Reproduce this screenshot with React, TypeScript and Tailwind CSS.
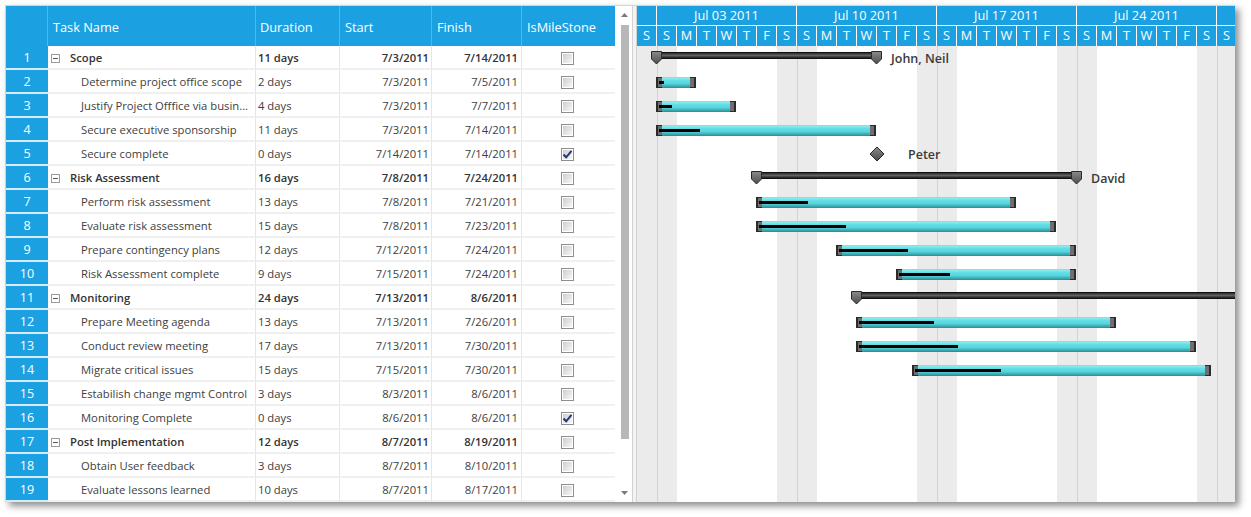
import React from "react";

type Task = {
  id: number;
  name: string;
  dur: string;
  start: string;
  finish: string;
  summary?: boolean;
  checked?: boolean;
};

const tasks: Task[] = [
  { id: 1, name: "Scope", dur: "11 days", start: "7/3/2011", finish: "7/14/2011", summary: true },
  { id: 2, name: "Determine project office scope", dur: "2 days", start: "7/3/2011", finish: "7/5/2011" },
  { id: 3, name: "Justify Project Offfice via busin...", dur: "4 days", start: "7/3/2011", finish: "7/7/2011" },
  { id: 4, name: "Secure executive sponsorship", dur: "11 days", start: "7/3/2011", finish: "7/14/2011" },
  { id: 5, name: "Secure complete", dur: "0 days", start: "7/14/2011", finish: "7/14/2011", checked: true },
  { id: 6, name: "Risk Assessment", dur: "16 days", start: "7/8/2011", finish: "7/24/2011", summary: true },
  { id: 7, name: "Perform risk assessment", dur: "13 days", start: "7/8/2011", finish: "7/21/2011" },
  { id: 8, name: "Evaluate risk assessment", dur: "15 days", start: "7/8/2011", finish: "7/23/2011" },
  { id: 9, name: "Prepare contingency plans", dur: "12 days", start: "7/12/2011", finish: "7/24/2011" },
  { id: 10, name: "Risk Assessment complete", dur: "9 days", start: "7/15/2011", finish: "7/24/2011" },
  { id: 11, name: "Monitoring", dur: "24 days", start: "7/13/2011", finish: "8/6/2011", summary: true },
  { id: 12, name: "Prepare Meeting agenda", dur: "13 days", start: "7/13/2011", finish: "7/26/2011" },
  { id: 13, name: "Conduct review meeting", dur: "17 days", start: "7/13/2011", finish: "7/30/2011" },
  { id: 14, name: "Migrate critical issues", dur: "15 days", start: "7/15/2011", finish: "7/30/2011" },
  { id: 15, name: "Estabilish change mgmt Control", dur: "3 days", start: "8/3/2011", finish: "8/6/2011" },
  { id: 16, name: "Monitoring Complete", dur: "0 days", start: "8/6/2011", finish: "8/6/2011", checked: true },
  { id: 17, name: "Post Implementation", dur: "12 days", start: "8/7/2011", finish: "8/19/2011", summary: true },
  { id: 18, name: "Obtain User feedback", dur: "3 days", start: "8/7/2011", finish: "8/10/2011" },
  { id: 19, name: "Evaluate lessons learned", dur: "10 days", start: "8/7/2011", finish: "8/17/2011" },
];

type GanttItem =
  | { kind: "bar"; left: number; width: number; progress: number }
  | { kind: "summary"; left: number; width: number; open?: boolean; label?: string; labelX?: number }
  | { kind: "milestone"; x: number; label: string; labelX: number }
  | null;

// x positions are relative to the left edge of the chart
const gantt: GanttItem[] = [
  { kind: "summary", left: 19, width: 220, label: "John, Neil", labelX: 254 },
  { kind: "bar", left: 19, width: 40, progress: 8 },
  { kind: "bar", left: 19, width: 80, progress: 16 },
  { kind: "bar", left: 19, width: 220, progress: 44 },
  { kind: "milestone", x: 240, label: "Peter", labelX: 271 },
  { kind: "summary", left: 119, width: 320, label: "David", labelX: 454 },
  { kind: "bar", left: 119, width: 260, progress: 52 },
  { kind: "bar", left: 119, width: 300, progress: 90 },
  { kind: "bar", left: 199, width: 240, progress: 72 },
  { kind: "bar", left: 259, width: 180, progress: 54 },
  { kind: "summary", left: 219, width: 600, open: true },
  { kind: "bar", left: 219, width: 260, progress: 78 },
  { kind: "bar", left: 219, width: 340, progress: 102 },
  { kind: "bar", left: 275, width: 299, progress: 89 },
  null,
  null,
  null,
  null,
  null,
];

const dayLetters = ["S", "S", "M", "T", "W", "T", "F"];
const days = Array.from({ length: 30 }, (_, k) => k);
// last week is only partly in view, its label falls outside
const weeks = ["Jul 03 2011", "Jul 10 2011", "Jul 17 2011", "Jul 24 2011", ""];

function Checkbox({ checked }: { checked?: boolean }) {
  return (
    <div className="relative w-[13px] h-[13px] border border-[#8f8f8f] bg-white p-px">
      <div className="w-full h-full bg-[linear-gradient(135deg,#cfcfcf,#f6f6f6)]" />
      {checked && (
        <svg className="absolute -left-px -top-px" width="13" height="13" viewBox="0 0 13 13">
          <path d="M2.5 6.5 L5.2 9.3 L10.5 2.8" fill="none" stroke="#22367a" strokeWidth="2" />
        </svg>
      )}
    </div>
  );
}

function ExpandBox() {
  return (
    <div className="w-[9px] h-[9px] border border-[#9a9a9a] bg-white flex items-center justify-center">
      <div className="w-[5px] h-px bg-[#555]" />
    </div>
  );
}

function SummaryCap() {
  return (
    <svg width="11" height="14" viewBox="0 0 11 14">
      <defs>
        <linearGradient id="capg" x1="0" y1="0" x2="0" y2="1">
          <stop offset="0" stopColor="#8a8a8a" />
          <stop offset="1" stopColor="#4d4d4d" />
        </linearGradient>
      </defs>
      <polygon points="0.5,0.5 10.5,0.5 10.5,8 5.5,13 0.5,8" fill="url(#capg)" stroke="#2a2a2a" />
    </svg>
  );
}

function Bar({ left, width, progress }: { left: number; width: number; progress: number }) {
  return (
    <div className="absolute top-[7px] h-[11px] flex" style={{ left, width }}>
      <div className="w-[6px] h-full border-l-2 border-y border-[#2b2b2b] bg-[#6e6e6e]" />
      <div className="flex-1 h-full border-t border-[#9bd6da] bg-[linear-gradient(to_bottom,#8eecf0_0%,#62dfe6_25%,#57d5dd_55%,#3fb1b9_78%,#2b8a92_100%)]" />
      <div className="w-[6px] h-full border-r-2 border-y border-[#2b2b2b] bg-[#6e6e6e]" />
      <div className="absolute left-[3px] top-[4px] h-[3px] bg-black" style={{ width: progress - 3 }} />
    </div>
  );
}

function GanttRow({ item }: { item: GanttItem }) {
  if (!item) return <div className="h-[24px]" />;
  return (
    <div className="relative h-[24px]">
      {item.kind === "bar" && <Bar left={item.left} width={item.width} progress={item.progress} />}
      {item.kind === "summary" && (
        <>
          <div
            className="absolute top-[6px] h-[7px] border border-[#111] bg-[linear-gradient(to_bottom,#2a2a2a,#626262_50%,#1c1c1c)]"
            style={{ left: item.left, width: item.width }}
          />
          <div className="absolute top-[5px]" style={{ left: item.left - 5 }}>
            <SummaryCap />
          </div>
          {!item.open && (
            <div className="absolute top-[5px]" style={{ left: item.left + item.width - 5 }}>
              <SummaryCap />
            </div>
          )}
          {item.label && (
            <div
              className="absolute top-0 h-[24px] leading-[26px] text-[12.5px] font-semibold text-[#3a3a3a] whitespace-nowrap"
              style={{ left: item.labelX }}
            >
              {item.label}
            </div>
          )}
        </>
      )}
      {item.kind === "milestone" && (
        <>
          <svg className="absolute top-[4px]" style={{ left: item.x - 8 }} width="16" height="16" viewBox="0 0 16 16">
            <defs>
              <linearGradient id="msg" x1="0" y1="0" x2="0" y2="1">
                <stop offset="0" stopColor="#8c8c8c" />
                <stop offset="1" stopColor="#4a4a4a" />
              </linearGradient>
            </defs>
            <polygon points="8,1 15,8 8,15 1,8" fill="url(#msg)" stroke="#2a2a2a" />
          </svg>
          <div
            className="absolute top-0 h-[24px] leading-[26px] text-[12.5px] font-semibold text-[#3a3a3a] whitespace-nowrap"
            style={{ left: item.labelX }}
          >
            {item.label}
          </div>
        </>
      )}
    </div>
  );
}

function GridRow({ t }: { t: Task }) {
  const bold = t.summary ? "font-semibold text-[#333]" : "text-[#404040]";
  const cell = "h-full pt-[2px] flex items-center border-b-2 border-b-[#f0f0f0] border-r border-r-[#e6e6e6]";
  return (
    <div className="flex h-[24px] text-[11.25px]">
      <div className="w-[42px] shrink-0 h-full pt-[2px] flex items-center justify-center bg-[#1ba1e2] text-white text-[12.5px] border-b-2 border-b-[#d4ecf8]">
        {t.id}
      </div>
      <div className={`w-[208px] shrink-0 overflow-hidden whitespace-nowrap ${cell} ${bold}`}>
        {t.summary ? (
          <>
            <div className="ml-[3px] mr-[10px]">
              <ExpandBox />
            </div>
            <span>{t.name}</span>
          </>
        ) : (
          <span className="pl-[33px]">{t.name}</span>
        )}
      </div>
      <div className={`w-[84px] shrink-0 pl-[2px] ${cell} ${bold}`}>{t.dur}</div>
      <div className={`w-[92px] shrink-0 justify-end pr-[2px] ${cell} ${bold}`}>{t.start}</div>
      <div className={`w-[90px] shrink-0 justify-end pr-[3px] ${cell} ${bold}`}>{t.finish}</div>
      <div className={`w-[93px] shrink-0 justify-center pr-[2px] ${cell} border-r-0`}>
        <Checkbox checked={t.checked} />
      </div>
    </div>
  );
}

export default function App() {
  return (
    <div className="w-[1251px] h-[517px] bg-white font-['Open_Sans',sans-serif] overflow-hidden">
      <div className="ml-[5px] mt-[5px] w-[1230px] h-[497px] flex border-l border-t border-[#d4d4d4] bg-white shadow-[4px_4px_7px_rgba(0,0,0,0.45)]">
        {/* Grid */}
        <div className="w-[609px] shrink-0 flex flex-col">
          <div className="flex h-[40px] bg-[#1ba1e2] text-white text-[12.75px]">
            <div className="w-[42px] shrink-0 border-r border-[#4fb8ea]" />
            <div className="w-[208px] shrink-0 pl-[5px] pt-[3px] flex items-center border-r border-[#4fb8ea]">Task Name</div>
            <div className="w-[84px] shrink-0 pl-[4px] pt-[3px] flex items-center border-r border-[#4fb8ea]">Duration</div>
            <div className="w-[92px] shrink-0 pl-[5px] pt-[3px] flex items-center border-r border-[#4fb8ea]">Start</div>
            <div className="w-[90px] shrink-0 pl-[5px] pt-[3px] flex items-center border-r border-[#4fb8ea]">Finish</div>
            <div className="w-[93px] shrink-0 pl-[5px] pt-[3px] flex items-center">IsMileStone</div>
          </div>
          {tasks.map((t) => (
            <GridRow key={t.id} t={t} />
          ))}
        </div>

        {/* Scrollbar */}
        <div className="w-[17px] shrink-0 flex flex-col items-center bg-white">
          <svg className="mt-[7px] ml-[2px]" width="7" height="4" viewBox="0 0 7 4">
            <polygon points="3.5,0 7,4 0,4" fill="#7a7a7a" />
          </svg>
          <div className="mt-[8px] ml-[2px] w-[8px] h-[414px] bg-[#b7b7b7]" />
          <div className="flex-1" />
          <svg className="mb-[7px] ml-[2px]" width="7" height="4" viewBox="0 0 7 4">
            <polygon points="0,0 7,0 3.5,4" fill="#7a7a7a" />
          </svg>
        </div>

        {/* Splitter */}
        <div className="w-[5px] shrink-0 bg-[#f3f3f3] border-x border-[#d2d2d2]" />

        {/* Gantt */}
        <div className="w-[598px] shrink-0 overflow-hidden flex flex-col">
          <div className="bg-[#1ba1e2] text-white text-[12.75px]">
            <div className="flex h-[20px] border-b border-white">
              <div className="w-[20px] shrink-0 border-r border-white" />
              {weeks.map((w, i) => (
                <div key={i} className="w-[140px] shrink-0 flex items-center justify-center border-r border-white">
                  {w}
                </div>
              ))}
            </div>
            <div className="flex h-[20px]">
              {days.map((k) => (
                <div key={k} className="w-[20px] shrink-0 flex items-center justify-center border-r border-white">
                  {dayLetters[k % 7]}
                </div>
              ))}
            </div>
          </div>
          <div className="grid flex-1">
            <div className="col-start-1 row-start-1 flex">
              {days.map((k) => {
                const weekend = k % 7 === 0 || k % 7 === 1;
                const weekStart = k % 7 === 1;
                return (
                  <div
                    key={k}
                    className={`w-[20px] shrink-0 h-full ${weekend ? "bg-[#ebebeb]" : "bg-white"} ${
                      weekStart ? "border-l border-[#d3d3d3]" : ""
                    }`}
                  />
                );
              })}
            </div>
            <div className="col-start-1 row-start-1 flex flex-col">
              {gantt.map((item, i) => (
                <GanttRow key={i} item={item} />
              ))}
            </div>
          </div>
        </div>
      </div>
    </div>
  );
}
